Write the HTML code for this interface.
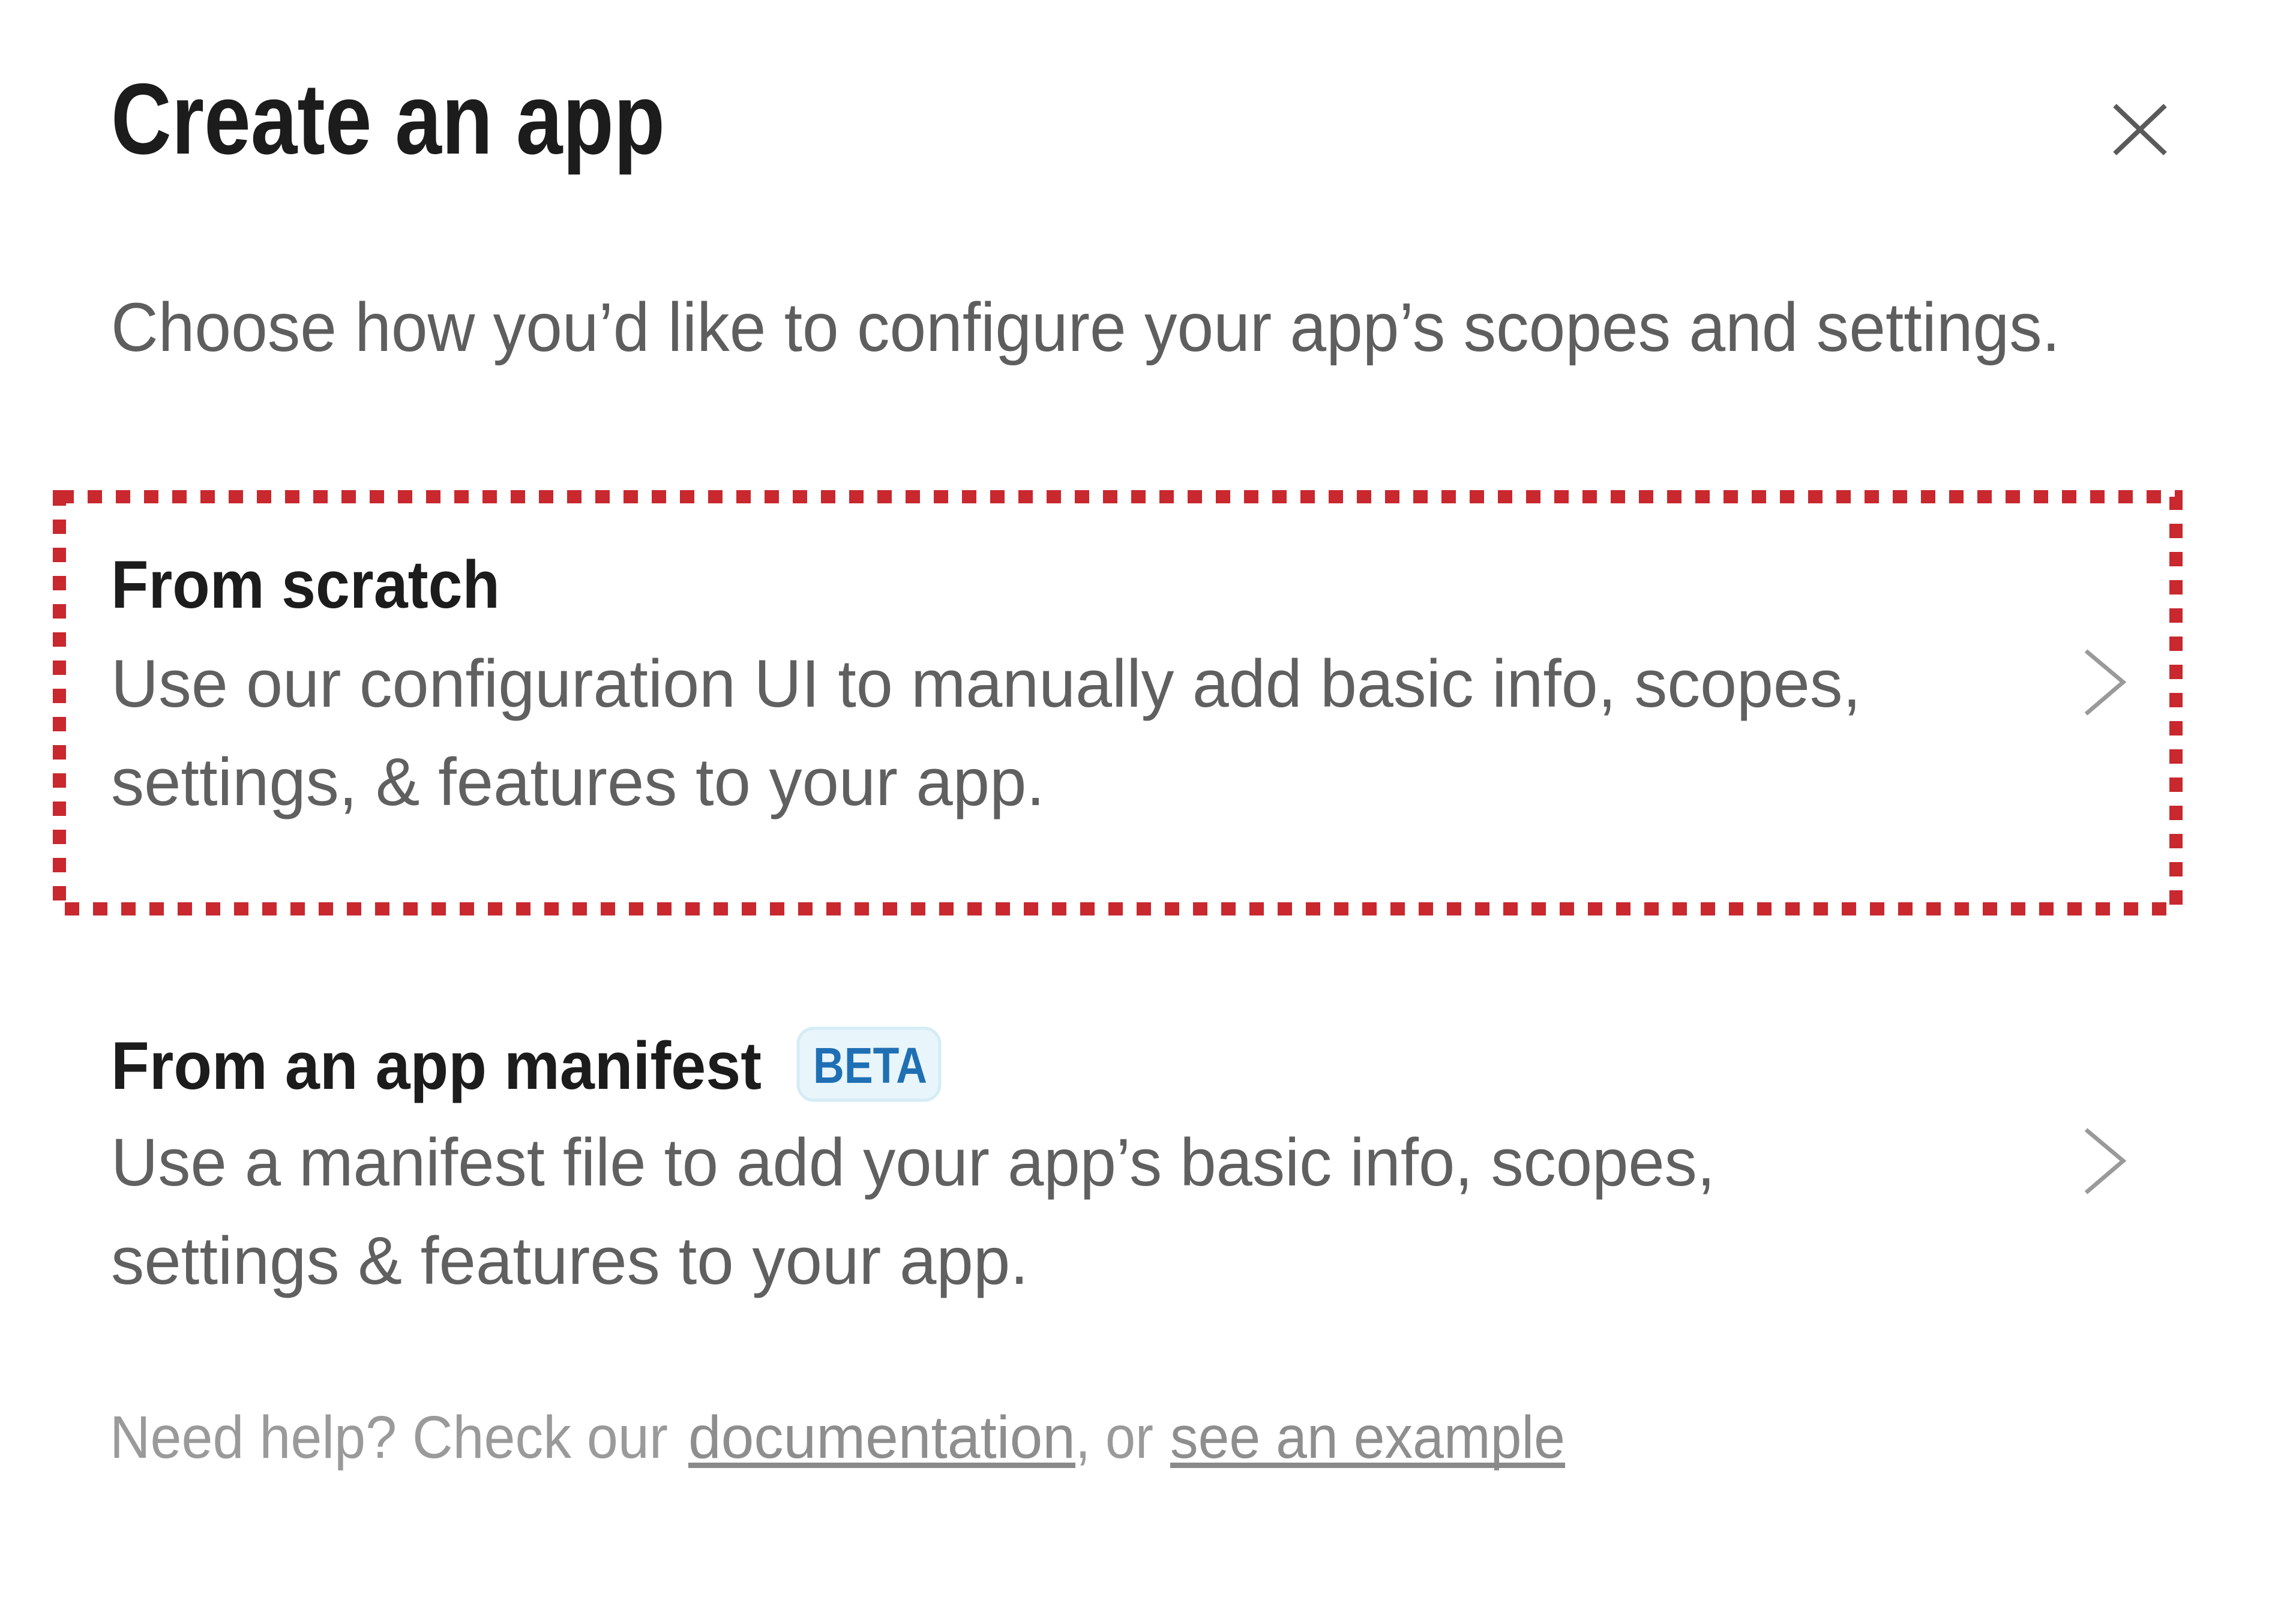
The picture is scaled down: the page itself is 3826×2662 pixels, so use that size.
<!DOCTYPE html>
<html><head><meta charset="utf-8"><style>
html,body{margin:0;padding:0;background:#fff;width:3826px;height:2662px;overflow:hidden}
svg{display:block}
text{font-family:"Liberation Sans",sans-serif}
</style></head><body>
<svg width="3826" height="2662" viewBox="0 0 3826 2662" xmlns="http://www.w3.org/2000/svg">
<rect width="3826" height="2662" fill="#fff"/>
<text x="185" y="256" font-size="168" font-weight="bold" fill="#1d1c1d" textLength="923" lengthAdjust="spacingAndGlyphs">Create an app</text>
<path d="M3524 176 L3608 256 M3608 176 L3524 256" stroke="#5a5a5a" stroke-width="8" fill="none"/>
<text x="185" y="585" font-size="115" fill="#5e5e5e" textLength="3248" lengthAdjust="spacingAndGlyphs">Choose how you’d like to configure your app’s scopes and settings.</text>
<rect x="99" y="828" width="3527" height="687" fill="none" stroke="#c8282e" stroke-width="22" stroke-dasharray="24 23"/>
<text x="185" y="1013" font-size="112" font-weight="bold" fill="#1d1c1d" textLength="648" lengthAdjust="spacingAndGlyphs">From scratch</text>
<text x="185" y="1178" font-size="112" fill="#616061" textLength="2916" lengthAdjust="spacingAndGlyphs">Use our configuration UI to manually add basic info, scopes,</text>
<text x="185" y="1342" font-size="112" fill="#616061" textLength="1556" lengthAdjust="spacingAndGlyphs">settings, &amp; features to your app.</text>
<path d="M3476 1085 L3538 1137 L3476 1190" stroke="#9a9a9a" stroke-width="7" fill="none"/>
<text x="185" y="1815" font-size="112" font-weight="bold" fill="#1d1c1d" textLength="1084" lengthAdjust="spacingAndGlyphs">From an app manifest</text>
<rect x="1330" y="1714" width="236" height="120" rx="26" fill="#e8f5fa" stroke="#d4ecf6" stroke-width="5"/>
<text x="1355" y="1805" font-size="84" font-weight="bold" fill="#1f6fb5" textLength="190" lengthAdjust="spacingAndGlyphs">BETA</text>
<text x="185" y="1976" font-size="112" fill="#616061" textLength="2673" lengthAdjust="spacingAndGlyphs">Use a manifest file to add your app’s basic info, scopes,</text>
<text x="185" y="2140" font-size="112" fill="#616061" textLength="1529" lengthAdjust="spacingAndGlyphs">settings &amp; features to your app.</text>
<path d="M3476 1883 L3538 1935 L3476 1988" stroke="#9a9a9a" stroke-width="7" fill="none"/>
<text x="183" y="2430" font-size="100" fill="#9a9a9a" textLength="930" lengthAdjust="spacingAndGlyphs">Need help? Check our</text>
<text x="1147" y="2430" font-size="100" fill="#8e8e8e" textLength="645" lengthAdjust="spacingAndGlyphs">documentation</text>
<text x="1792" y="2430" font-size="100" fill="#9a9a9a" textLength="130" lengthAdjust="spacingAndGlyphs">, or</text>
<text x="1950" y="2430" font-size="100" fill="#8e8e8e" textLength="658" lengthAdjust="spacingAndGlyphs">see an example</text>
<rect x="1147" y="2438" width="645" height="9" fill="#8a8a8a"/>
<rect x="1950" y="2438" width="658" height="9" fill="#8a8a8a"/>
</svg>
</body></html>
